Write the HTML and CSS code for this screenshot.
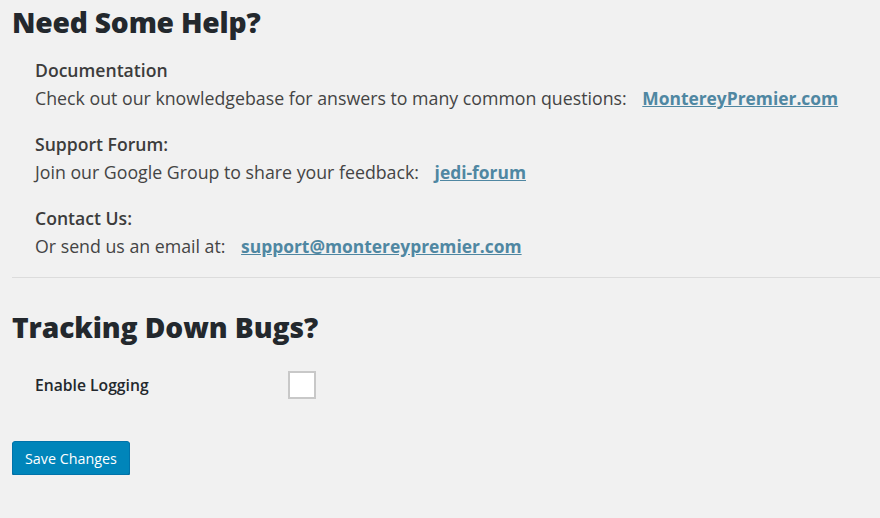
FILE: index.html
```html
<!DOCTYPE html>
<html>
<head>
<meta charset="utf-8">
<link rel="stylesheet" href="styles.css">
</head>
<body>
<div class="wrap">
  <h2 class="title">Need Some Help?</h2>
  <div class="help">
    <div class="item">
      <div class="label">Documentation</div>
      <div class="text">Check out our knowledgebase for answers to many common questions: <a href="#">MontereyPremier.com</a></div>
    </div>
    <div class="item">
      <div class="label">Support Forum:</div>
      <div class="text">Join our Google Group to share your feedback: <a href="#">jedi-forum</a></div>
    </div>
    <div class="item">
      <div class="label">Contact Us:</div>
      <div class="text">Or send us an email at: <a href="#">support@montereypremier.com</a></div>
    </div>
  </div>
  <hr class="sep">
  <h2 class="title bugs">Tracking Down Bugs?</h2>
  <div class="form-row">
    <div class="form-label">Enable Logging</div>
    <input type="checkbox" class="check">
  </div>
  <div class="submit">
    <button class="button">Save Changes</button>
  </div>
</div>
</body>
</html>
```
FILE: styles.css
```css
html, body {
  margin: 0;
  padding: 0;
  background: #f1f1f1;
}
body {
  font-family: "Open Sans", "Noto Sans", sans-serif;
  color: #444;
}
.wrap {
  padding: 0 0 0 12px;
}
.title {
  margin: 0;
  padding-top: 4px;
  font-size: 28.2px;
  font-weight: 800;
  color: #23282d;
  line-height: 36px;
  letter-spacing: -0.2px;
}
.bugs {
  padding-top: 31px;
  letter-spacing: -0.1px;
}
.help {
  padding-left: 23px;
  padding-top: 17px;
  display: flex;
  flex-direction: column;
  gap: 20px;
}
.item {
  display: flex;
  flex-direction: column;
  gap: 2px;
}
.label {
  font-size: 17.6px;
  font-weight: 600;
  line-height: 26px;
  color: #3c3c3c;
}
.text {
  font-size: 17.75px;
  line-height: 26px;
  color: #444;
}
.text a {
  color: #4f87a2;
  font-weight: 700;
  font-size: 17.4px;
  margin-left: 11px;
  text-decoration: underline;
}
.sep {
  border: 0;
  border-top: 1px solid #dcdcdc;
  margin: 18px 0 0 0;
}
.form-row {
  display: flex;
  align-items: center;
  padding-left: 23px;
  margin-top: 26px;
}
.form-label {
  width: 253px;
  font-size: 15.7px;
  font-weight: 600;
  color: #23282d;
}
.check {
  appearance: none;
  -webkit-appearance: none;
  margin: 0;
  width: 28px;
  height: 28px;
  background: #fff;
  border: 2px solid #c8c8c8;
  box-sizing: border-box;
}
.submit {
  padding-top: 42px;
}
.button {
  font-family: "Open Sans", "Noto Sans", sans-serif;
  font-size: 14.3px;
  color: #fff;
  background: #0085ba;
  border: 1px solid #0073aa;
  border-radius: 3px;
  height: 34px;
  padding: 0 12px;
  box-shadow: 0 1px 0 #006799;
}
```
